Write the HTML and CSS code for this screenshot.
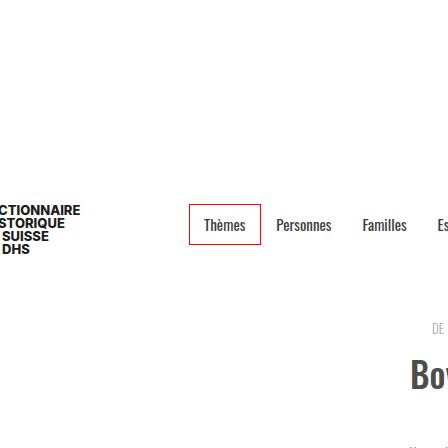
FILE: index.html
```
<!DOCTYPE html>
<html lang="fr">
<head>
<meta charset="utf-8">
<meta name="viewport" content="width=device-width, initial-scale=1">
<title>Dictionnaire historique de la Suisse</title>
<link rel="stylesheet" href="styles.css">
</head>
<body>
<header class="header">
  <a class="logo" href="#">
    <span>CTIONNAIRE</span>
    <span>STORIQUE</span>
    <span class="logo-inset">SUISSE</span>
    <span class="logo-inset">DHS</span>
  </a>
  <nav class="menu">
    <a class="menu-link active" href="#">Thèmes</a>
    <a class="menu-link" href="#">Personnes</a>
    <a class="menu-link" href="#">Familles</a>
    <a class="menu-link" href="#">Esp</a>
  </nav>
</header>
<main class="article">
  <nav class="languages"><a href="#">DE</a></nav>
  <h1 class="title">Bov</h1>
  <p class="version">Version du</p>
</main>
</body>
</html>
```
FILE: styles.css
```
* { box-sizing: border-box; }
html { overflow: hidden; }
body {
  margin: 0;
  height: 100vh;
  overflow: hidden;
  background: #fff;
  color: #3c3c3c;
  font-family: "Oswald", "Roboto Condensed", "Liberation Sans Narrow", "Liberation Sans", sans-serif;
}
a { color: inherit; text-decoration: none; }
.header {
  display: flex;
  align-items: flex-start;
  justify-content: space-between;
  padding-top: 204px;
}
.logo {
  display: flex;
  flex-direction: column;
  margin-left: -2px;
  color: #1d1d1b;
  font: 800 13px/13px "Inter", sans-serif;
}
.logo-inset { padding-left: 4px; }
.menu {
  display: flex;
  width: 259px;
  font-size: 15px;
  font-weight: 375;
  line-height: 39px;
  white-space: nowrap;
}
.menu-link {
  padding: 0 15px 0 14px;
  border: 1px solid transparent;
}
.active { border-color: #f00; }
.article {
  padding: 62px 0 0 410px;
  white-space: nowrap;
}
.languages {
  padding-left: 22px;
  color: #aaa;
  font-size: 13px;
  font-weight: 350;
  line-height: 20px;
}
.title {
  margin: 11px 0 0;
  color: #4d4d4d;
  font-size: 35px;
  font-weight: 500;
  line-height: 48px;
}
.version {
  margin: 47px 0 0;
  color: #555;
  font-size: 12px;
  font-weight: 300;
  line-height: 16px;
}
```
